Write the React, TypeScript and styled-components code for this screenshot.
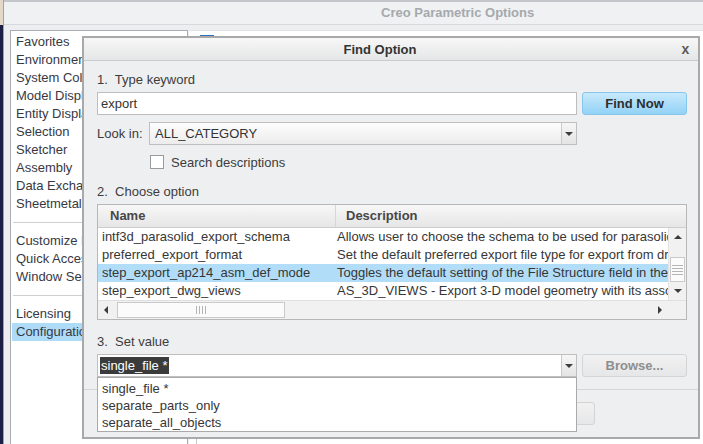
import React from 'react';
import styled, { createGlobalStyle } from 'styled-components';

const Global = createGlobalStyle`
  html, body { margin: 0; padding: 0; width: 703px; height: 444px; overflow: hidden; background: #1b1f45; }
  body { font-family: "Liberation Sans", Arial, sans-serif; font-size: 13px; color: #363636; }
  * { box-sizing: border-box; }
`;

const Screen = styled.div`
  position: relative;
  width: 703px;
  height: 444px;
  overflow: hidden;
  display: flex;
`;

const DesktopStrip = styled.div`
  width: 3px;
  display: flex;
  flex-direction: column;
`;

const StripPiece = styled.div<{ $top?: boolean }>`
  flex: ${p => (p.$top ? '0 0 25px' : '1')};
  background: ${p => (p.$top ? '#e4d8c8' : '#1b1f45')};
`;

const Window = styled.div`
  flex: 1;
  min-width: 0;
  display: flex;
  flex-direction: column;
  background: #eceef0;
  border-left: 1px solid #9ea3a8;
`;

const WinTitle = styled.div`
  height: 25px;
  flex: 0 0 25px;
  border-top: 2px solid #c3c7cb;
  border-bottom: 1px solid #d6dadd;
  background: #eff1f3;
  padding-left: 377px;
  font-weight: bold;
  color: #a5a9ad;
  line-height: 22px;
  white-space: nowrap;
`;

const WinBody = styled.div`
  flex: 1;
  display: flex;
  gap: 1px;
  padding: 5px 0 0 6px;
`;

const NavList = styled.div`
  width: 178px;
  flex: 0 0 178px;
  background: #fff;
  border: 1px solid #a9adb1;
  border-bottom: none;
  padding-top: 2px;
`;

const NavItem = styled.div<{ $active?: boolean }>`
  height: 18px;
  line-height: 18px;
  margin: 0 1px;
  padding-left: 4px;
  color: #383844;
  white-space: nowrap;
  overflow: hidden;
  background: ${p => (p.$active ? '#aedcf8' : 'transparent')};
`;

const NavSep = styled.div`
  margin: 9px 0 9px 2px;
  border-top: 1px solid #cfcfcf;
`;

const ContentPanel = styled.div`
  flex: 1;
  background: #fff;
  border-top: 1px solid #e2e4e6;
  display: flex;
  flex-direction: column;
`;

const PanelToolbar = styled.div`
  height: 30px;
  padding: 4px 0 0 11px;
`;

const ToolIcon = styled.div`
  width: 14px;
  height: 12px;
  background: #5b9bd5;
  border-top: 1px solid #2f6fb0;
`;

const PanelTree = styled.div`
  flex: 1;
  margin-left: 7px;
  border-left: 1px solid #c8c8c8;
`;

/* ---------- Dialog ---------- */

const Dialog = styled.div`
  position: absolute;
  left: 82px;
  top: 36px;
  width: 618px;
  height: 403px;
  border: 2px solid #a7a9ab;
  background: #eeeff1;
  display: flex;
  flex-direction: column;
`;

const DialogTitle = styled.div`
  height: 23px;
  flex: 0 0 23px;
  display: flex;
  align-items: center;
  background: linear-gradient(#f7f7f7, #e5e6e7);
  border-bottom: 1px solid #c9cacc;
`;

const TitleText = styled.div`
  flex: 1;
  text-align: center;
  font-weight: bold;
  color: #333;
`;

const CloseBtn = styled.div`
  width: 22px;
  text-align: center;
  font-weight: bold;
  font-size: 14px;
  color: #5a5a5a;
  padding-right: 3px;
`;

const DialogBody = styled.div`
  display: flex;
  flex-direction: column;
  padding: 10px 11px 0 13px;
`;

const StepLabel = styled.div<{ $mt?: number }>`
  line-height: 18px;
  height: 18px;
  white-space: pre;
  color: #3c3c3c;
  margin-top: ${p => p.$mt ?? 0}px;
`;

const Row = styled.div<{ $mt: number; $gap?: number }>`
  display: flex;
  align-items: center;
  gap: ${p => p.$gap ?? 5}px;
  margin-top: ${p => p.$mt}px;
  position: relative;
`;

const TextField = styled.div`
  width: 480px;
  height: 23px;
  background: #fff;
  border: 1px solid #bdbdbd;
  padding-left: 3px;
  line-height: 21px;
  color: #333;
`;

const Button = styled.div<{ $primary?: boolean; $disabled?: boolean }>`
  width: 105px;
  height: 23px;
  border-radius: 3px;
  font-weight: bold;
  text-align: center;
  line-height: 21px;
  border: 1px solid ${p => (p.$primary ? '#87c6ec' : '#d3d4d6')};
  background: ${p =>
    p.$primary ? 'linear-gradient(#c8e9fc, #92d2f6)' : 'linear-gradient(#f1f1f2, #e6e7e8)'};
  color: ${p => (p.$disabled ? '#8e8e8e' : '#2e2e2e')};
`;

const FieldLabel = styled.div`
  width: 52px;
  flex: 0 0 52px;
  color: #3c3c3c;
`;

const Combo = styled.div<{ $width: number; $flat?: boolean }>`
  position: relative;
  width: ${p => p.$width}px;
  height: 23px;
  display: flex;
  border: 1px solid #bfbfbf;
  background: ${p => (p.$flat ? '#fff' : 'linear-gradient(#fdfdfd, #ececec)')};
`;

const ComboText = styled.div`
  flex: 1;
  padding-left: 5px;
  line-height: 21px;
  color: #333;
  white-space: nowrap;
`;

const ComboValue = styled.div`
  flex: 1;
  padding: 2px 0 0 2px;
`;

const SelectedText = styled.span`
  display: inline-block;
  height: 17px;
  line-height: 17px;
  padding: 0 1px;
  background: #3b3b3b;
  color: #fff;
`;

const ArrowBox = styled.div`
  width: 15px;
  border-left: 1px solid #c9c9c9;
  background: linear-gradient(#f6f6f6, #e4e4e4);
  display: flex;
  align-items: center;
  justify-content: center;
`;

const Tri = styled.div<{ $dir: 'up' | 'down' | 'left' | 'right'; $size?: number }>`
  width: 0;
  height: 0;
  ${p => {
    const s = p.$size ?? 4;
    const c = '#3c3c3c';
    switch (p.$dir) {
      case 'down':
        return `border-left:${s}px solid transparent;border-right:${s}px solid transparent;border-top:${s}px solid ${c};`;
      case 'up':
        return `border-left:${s}px solid transparent;border-right:${s}px solid transparent;border-bottom:${s}px solid ${c};`;
      case 'left':
        return `border-top:${s}px solid transparent;border-bottom:${s}px solid transparent;border-right:${s}px solid ${c};`;
      default:
        return `border-top:${s}px solid transparent;border-bottom:${s}px solid transparent;border-left:${s}px solid ${c};`;
    }
  }}
`;

const CheckRow = styled.div`
  display: flex;
  align-items: center;
  gap: 7px;
  height: 18px;
  margin-top: 8px;
  padding-left: 53px;
  color: #3c3c3c;
`;

const CheckBox = styled.div`
  width: 14px;
  height: 14px;
  border: 1px solid #9a9a9a;
  background: #fff;
`;

/* ---------- Table ---------- */

const Table = styled.div`
  margin-top: 3px;
  width: 590px;
  height: 116px;
  border: 1px solid #b7b7b7;
  background: #fff;
  display: flex;
  flex-direction: column;
`;

const HeaderRow = styled.div`
  height: 23px;
  flex: 0 0 23px;
  display: flex;
  background: linear-gradient(#f7f7f7, #e6e6e6);
  border-bottom: 1px solid #cdcdcd;
  font-weight: bold;
  color: #474747;
  line-height: 22px;
`;

const HeadCell = styled.div<{ $w?: number }>`
  ${p => (p.$w ? `width:${p.$w}px;flex:0 0 ${p.$w}px;` : 'flex:1;')}
  padding-left: ${p => (p.$w ? 12 : 10)}px;
  border-right: ${p => (p.$w ? '1px solid #d6d6d6' : 'none')};
`;

const TableMid = styled.div`
  display: flex;
  height: 72px;
`;

const Rows = styled.div`
  flex: 1;
  min-width: 0;
`;

const DataRow = styled.div<{ $sel?: boolean }>`
  display: flex;
  height: 18px;
  line-height: 18px;
  background: ${p => (p.$sel ? '#b1ddf8' : '#fff')};
  color: #363636;
  white-space: nowrap;
`;

const NameCell = styled.div`
  width: 238px;
  flex: 0 0 238px;
  padding-left: 4px;
  overflow: hidden;
`;

const DescCell = styled.div`
  flex: 1;
  min-width: 0;
  padding-left: 1px;
  overflow: hidden;
`;

const VScroll = styled.div`
  width: 18px;
  flex: 0 0 18px;
  background: #f1f1f1;
  border-left: 1px solid #e2e2e2;
  display: flex;
  flex-direction: column;
`;

const ScrollBtn = styled.div<{ $h?: number; $w?: number }>`
  ${p => (p.$h ? `height:${p.$h}px;flex:0 0 ${p.$h}px;` : '')}
  ${p => (p.$w ? `width:${p.$w}px;flex:0 0 ${p.$w}px;` : '')}
  display: flex;
  align-items: center;
  justify-content: center;
`;

const VThumb = styled.div`
  margin: 12px 1px 0 1px;
  height: 25px;
  flex: 0 0 25px;
  border: 1px solid #c9c9c9;
  background: #fbfbfb;
  display: flex;
  flex-direction: column;
  align-items: center;
  justify-content: center;
  gap: 2px;
`;

const GripH = styled.div`
  width: 11px;
  height: 1px;
  background: #b4b4b4;
`;

const HScroll = styled.div`
  height: 19px;
  flex: 0 0 19px;
  display: flex;
  background: #f1f1f1;
  border-top: 1px solid #e0e0e0;
`;

const HThumb = styled.div`
  margin: 1px 0 1px 3px;
  width: 168px;
  border: 1px solid #c9c9c9;
  background: #fbfbfb;
  display: flex;
  align-items: center;
  justify-content: center;
  gap: 2px;
`;

const GripV = styled.div`
  width: 1px;
  height: 8px;
  background: #b4b4b4;
`;

const Spacer = styled.div`
  flex: 1;
`;

const Corner = styled.div`
  width: 19px;
  flex: 0 0 19px;
  background: #f1f1f1;
`;

/* ---------- Dropdown + footer ---------- */

const DropList = styled.div`
  position: absolute;
  left: -1px;
  top: 22px;
  width: 480px;
  height: 55px;
  background: #fff;
  border: 1px solid #aaaaaa;
  padding-top: 2px;
  z-index: 5;
`;

const DropItem = styled.div`
  height: 17px;
  line-height: 17px;
  padding-left: 4px;
  color: #363636;
`;

const Footer = styled.div`
  margin-top: 12px;
  border-top: 1px solid #d4d5d7;
  display: flex;
  justify-content: flex-end;
  padding: 12px 103px 0 0;
`;

const FooterBtn = styled(Button)`
  width: 84px;
  font-weight: normal;
`;

const rows = [
  {
    name: 'intf3d_parasolid_export_schema',
    desc: 'Allows user to choose the schema to be used for parasolid export.',
  },
  {
    name: 'preferred_export_format',
    desc: 'Set the default preferred export file type for export from drawing mode.',
  },
  {
    name: 'step_export_ap214_asm_def_mode',
    desc: 'Toggles the default setting of the File Structure field in the STEP export dialog.',
    sel: true,
  },
  {
    name: 'step_export_dwg_views',
    desc: 'AS_3D_VIEWS - Export 3-D model geometry with its associated annotations.',
  },
];

const navTop = [
  'Favorites',
  'Environment',
  'System Colors',
  'Model Display',
  'Entity Display',
  'Selection',
  'Sketcher',
  'Assembly',
  'Data Exchange',
  'Sheetmetal',
];
const navMid = ['Customize Ribbon', 'Quick Access Toolbar', 'Window Settings'];

export default function App() {
  return (
    <>
      <Global />
      <Screen>
        <DesktopStrip>
          <StripPiece $top />
          <StripPiece />
        </DesktopStrip>
        <Window>
          <WinTitle>Creo Parametric Options</WinTitle>
          <WinBody>
            <NavList>
              {navTop.map(n => (
                <NavItem key={n}>{n}</NavItem>
              ))}
              <NavSep />
              {navMid.map(n => (
                <NavItem key={n}>{n}</NavItem>
              ))}
              <NavSep />
              <NavItem>Licensing</NavItem>
              <NavItem $active>Configuration Editor</NavItem>
            </NavList>
            <ContentPanel>
              <PanelToolbar>
                <ToolIcon />
              </PanelToolbar>
              <PanelTree />
            </ContentPanel>
          </WinBody>
        </Window>

        <Dialog>
          <DialogTitle>
            <TitleText>Find Option</TitleText>
            <CloseBtn>x</CloseBtn>
          </DialogTitle>
          <DialogBody>
            <StepLabel>{'1.  Type keyword'}</StepLabel>
            <Row $mt={3}>
              <TextField>export</TextField>
              <Button $primary>Find Now</Button>
            </Row>
            <Row $mt={7} $gap={0}>
              <FieldLabel>Look in:</FieldLabel>
              <Combo $width={428}>
                <ComboText>ALL_CATEGORY</ComboText>
                <ArrowBox>
                  <Tri $dir="down" $size={4} />
                </ArrowBox>
              </Combo>
            </Row>
            <CheckRow>
              <CheckBox />
              <span>Search descriptions</span>
            </CheckRow>
            <StepLabel $mt={12}>{'2.  Choose option'}</StepLabel>
            <Table>
              <HeaderRow>
                <HeadCell $w={238}>Name</HeadCell>
                <HeadCell>Description</HeadCell>
              </HeaderRow>
              <TableMid>
                <Rows>
                  {rows.map(r => (
                    <DataRow key={r.name} $sel={r.sel}>
                      <NameCell>{r.name}</NameCell>
                      <DescCell>{r.desc}</DescCell>
                    </DataRow>
                  ))}
                </Rows>
                <VScroll>
                  <ScrollBtn $h={17}>
                    <Tri $dir="up" $size={4} />
                  </ScrollBtn>
                  <VThumb>
                    <GripH />
                    <GripH />
                    <GripH />
                    <GripH />
                  </VThumb>
                  <Spacer />
                  <ScrollBtn $h={18}>
                    <Tri $dir="down" $size={4} />
                  </ScrollBtn>
                </VScroll>
              </TableMid>
              <HScroll>
                <ScrollBtn $w={16}>
                  <Tri $dir="left" $size={4} />
                </ScrollBtn>
                <HThumb>
                  <GripV />
                  <GripV />
                  <GripV />
                  <GripV />
                </HThumb>
                <Spacer />
                <ScrollBtn $w={14}>
                  <Tri $dir="right" $size={4} />
                </ScrollBtn>
                <Corner />
              </HScroll>
            </Table>
            <StepLabel $mt={13}>{'3.  Set value'}</StepLabel>
            <Row $mt={3}>
              <Combo $width={480} $flat>
                <ComboValue>
                  <SelectedText>single_file *</SelectedText>
                </ComboValue>
                <ArrowBox>
                  <Tri $dir="down" $size={4} />
                </ArrowBox>
                <DropList>
                  <DropItem>single_file *</DropItem>
                  <DropItem>separate_parts_only</DropItem>
                  <DropItem>separate_all_objects</DropItem>
                </DropList>
              </Combo>
              <Button $disabled>Browse...</Button>
            </Row>
          </DialogBody>
          <Footer>
            <FooterBtn>Close</FooterBtn>
          </Footer>
        </Dialog>
      </Screen>
    </>
  );
}
